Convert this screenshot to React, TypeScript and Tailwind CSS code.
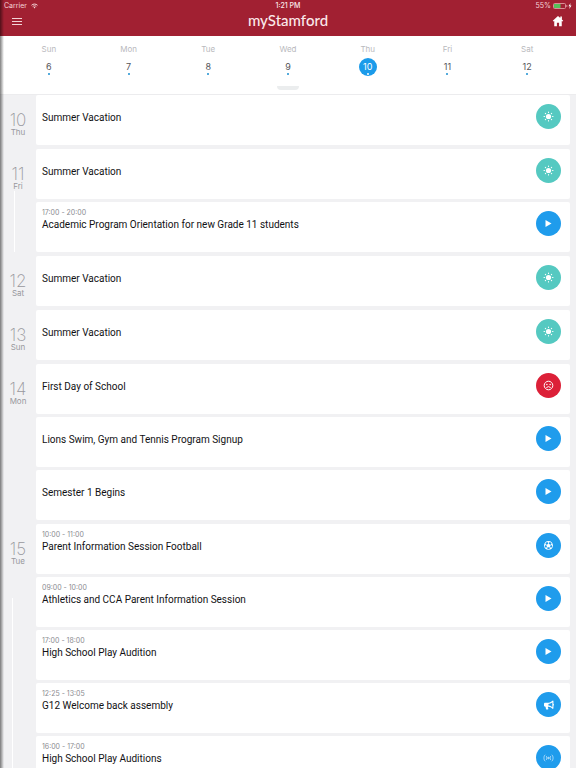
import { useState } from "react";
import clsx from "clsx";
import { FaBullhorn } from "react-icons/fa";
import { IoMdFootball } from "react-icons/io";

type IconName = "sun" | "play" | "sad" | "football" | "megaphone" | "radio";

interface CalendarEvent {
  title: string;
  time?: string;
  icon: IconName;
}

interface AgendaDay {
  date: number;
  weekday: string;
  line?: "short" | "long";
  events: CalendarEvent[];
}

const WEEK = [
  { weekday: "Sun", date: 6 },
  { weekday: "Mon", date: 7 },
  { weekday: "Tue", date: 8 },
  { weekday: "Wed", date: 9 },
  { weekday: "Thu", date: 10 },
  { weekday: "Fri", date: 11 },
  { weekday: "Sat", date: 12 },
];

const AGENDA: AgendaDay[] = [
  { date: 10, weekday: "Thu", events: [{ title: "Summer Vacation", icon: "sun" }] },
  {
    date: 11,
    weekday: "Fri",
    line: "short",
    events: [
      { title: "Summer Vacation", icon: "sun" },
      { title: "Academic Program Orientation for new Grade 11 students", time: "17:00 - 20:00", icon: "play" },
    ],
  },
  { date: 12, weekday: "Sat", events: [{ title: "Summer Vacation", icon: "sun" }] },
  { date: 13, weekday: "Sun", events: [{ title: "Summer Vacation", icon: "sun" }] },
  {
    date: 14,
    weekday: "Mon",
    events: [
      { title: "First Day of School", icon: "sad" },
      { title: "Lions Swim, Gym and Tennis Program Signup", icon: "play" },
      { title: "Semester 1 Begins", icon: "play" },
    ],
  },
  {
    date: 15,
    weekday: "Tue",
    line: "long",
    events: [
      { title: "Parent Information Session Football", time: "10:00 - 11:00", icon: "football" },
      { title: "Athletics and CCA Parent Information Session", time: "09:00 - 10:00", icon: "play" },
      { title: "High School Play Audition", time: "17:00 - 18:00", icon: "play" },
      { title: "G12 Welcome back assembly", time: "12:25 - 13:05", icon: "megaphone" },
      { title: "High School Play Auditions", time: "16:00 - 17:00", icon: "radio" },
    ],
  },
];

export default function App() {
  const [selected, setSelected] = useState(10);

  return (
    <div className="relative flex h-screen flex-col overflow-hidden bg-[#f1f1f3] font-['Inter',sans-serif]">
      <TopBar />

      {/* ── Week strip ───────────────────────────────────────────────── */}
      <nav aria-label="Week" className="shrink-0 border-b border-[#ececee] bg-white px-[9px] pt-2">
        <div className="grid grid-cols-7">
          {WEEK.map((day) => (
            <button key={day.date} onClick={() => setSelected(day.date)} className="flex flex-col items-center gap-1">
              <span className="text-[8px] leading-[10px] text-[#b9b9bd]">{day.weekday}</span>
              <span
                className={clsx(
                  "flex size-[18px] flex-col items-center rounded-full pt-[3px]",
                  selected === day.date ? "bg-[#1b9bea] text-white" : "text-[#55555a]"
                )}
              >
                <span className="text-[9px] leading-3">{day.date}</span>
                <span
                  className={clsx("size-[2px] rounded-full", selected === day.date ? "bg-white" : "bg-[#1d8fd0]")}
                />
              </span>
            </button>
          ))}
        </div>
        <div className="mx-auto mt-[10px] mb-1 h-1 w-[22px] rounded-b-full rounded-t-xs bg-[#ebedee]" />
      </nav>

      {/* ── Agenda ───────────────────────────────────────────────────── */}
      <main className="flex min-h-0 flex-1 flex-col gap-1 overflow-y-auto [scrollbar-width:none]">
        {AGENDA.map((day) => (
          <DaySection key={day.date} day={day} />
        ))}
      </main>

      {/* edge shadow */}
      <div className="pointer-events-none absolute inset-y-0 left-0 w-1 bg-linear-to-r from-black/50 to-transparent" />
    </div>
  );
}

function TopBar() {
  return (
    <header className="shrink-0 bg-[#a12032] text-white">
      <div className="grid h-3 grid-cols-3 items-center px-1 text-[7px] leading-3 text-[#f5d5d8]">
        <span className="flex items-center gap-1">
          Carrier
          <WifiIcon />
        </span>
        <span className="text-center font-medium text-[#fbe9ea]">1:21 PM</span>
        <span className="flex items-center justify-end gap-[2px]">
          55%
          <BatteryIcon />
        </span>
      </div>
      <div className="flex h-6 items-start justify-between px-3">
        <button aria-label="Menu" className="flex h-[18px] w-3 flex-col justify-center gap-[2px]">
          <span className="h-px w-[10px] bg-[#f3d3d6]" />
          <span className="h-px w-[10px] bg-[#f3d3d6]" />
          <span className="h-px w-[10px] bg-[#f3d3d6]" />
        </button>
        <h1 className="font-['Lato',sans-serif] text-[15px] leading-4 font-medium text-[#fbe9ea]">myStamford</h1>
        <button aria-label="Home" className="flex h-[18px] items-center">
          <HomeIcon />
        </button>
      </div>
    </header>
  );
}

function DaySection({ day }: { day: AgendaDay }) {
  return (
    <section className="flex shrink-0">
      <div className="flex w-9 shrink-0 flex-col items-center pt-[18px] text-[#98989d]">
        <h2 className="flex flex-col items-center">
          <span className="text-[17px] leading-[14px] font-extralight">{day.date}</span>
          <span className="text-[8px] leading-[10px]">{day.weekday}</span>
        </h2>
        {day.line === "short" && <div className="mr-2 w-px flex-1 bg-white" />}
        {day.line === "long" && <div className="mt-8 mr-3 w-px flex-1 bg-white" />}
      </div>
      <ul className="flex min-w-0 flex-1 flex-col gap-[3px] pr-[6px]">
        {day.events.map((event) => (
          <EventCard key={event.title} event={event} />
        ))}
      </ul>
    </section>
  );
}

function EventCard({ event }: { event: CalendarEvent }) {
  return (
    <li className="flex h-[50px] items-start justify-between rounded-xs bg-white pr-[9px] pl-[6px]">
      <div className="flex flex-col pt-[7px]">
        <span className="h-2 text-[7px] leading-2 text-[#8b8b90]">{event.time}</span>
        <h3 className="font-['Roboto',sans-serif] text-[10px] leading-4 text-[#111113]">{event.title}</h3>
      </div>
      <EventBadge name={event.icon} />
    </li>
  );
}

const BADGE_COLORS: Record<IconName, string> = {
  sun: "bg-[#55c9c1]",
  play: "bg-[#1f9cec]",
  sad: "bg-[#dc2038]",
  football: "bg-[#1f9cec]",
  megaphone: "bg-[#1f9cec]",
  radio: "bg-[#1f9cec]",
};

function EventBadge({ name }: { name: IconName }) {
  return (
    <span
      className={clsx(
        "mt-[9px] flex size-[25px] shrink-0 items-center justify-center rounded-full text-white",
        BADGE_COLORS[name]
      )}
    >
      {name === "sun" && <SunIcon />}
      {name === "play" && (
        <svg width="9" height="9" viewBox="0 0 9 9" fill="currentColor">
          <path d="M1.500 1 7.500 4.500 1.500 8Z" />
        </svg>
      )}
      {name === "sad" && <SadIcon />}
      {name === "football" && <IoMdFootball size={11} />}
      {name === "megaphone" && <FaBullhorn size={10} />}
      {name === "radio" && <RadioIcon />}
    </span>
  );
}

// ─── Icons ────────────────────────────────────────────────────────────────────

function SunIcon() {
  return (
    <svg width="11" height="11" viewBox="0 0 22 22" fill="currentColor">
      <circle cx="11" cy="11" r="5.200" />
      {[0, 45, 90, 135, 180, 225, 270, 315].map((angle) => (
        <rect key={angle} x="10" y="1" width="2" height="3" rx="1" transform={`rotate(${angle} 11 11)`} />
      ))}
    </svg>
  );
}

function SadIcon() {
  return (
    <svg width="11" height="11" viewBox="0 0 22 22" fill="none" stroke="currentColor" strokeWidth="2">
      <circle cx="11" cy="11" r="8.6" />
      <path d="M7 16c1-3.600 7-3.600 8 0" />
      <circle cx="7.800" cy="9" r="1.500" fill="currentColor" stroke="none" />
      <circle cx="14.200" cy="9" r="1.500" fill="currentColor" stroke="none" />
    </svg>
  );
}

function RadioIcon() {
  return (
    <svg width="11" height="8" viewBox="0 0 22 16" fill="none" stroke="#b9e0fa" strokeWidth="1.6">
      <path d="M4.500 1.500c-3.600 1.500-3.600 11.500 0 13M17.500 1.500c3.600 1.500 3.600 11.500 0 13" />
      <path d="M6.500 4c1.600 2.500 1.600 5.500 0 8M15.500 4c-1.600 2.500-1.600 5.500 0 8" />
      <circle cx="11" cy="8" r="1.600" fill="#b9e0fa" />
    </svg>
  );
}

function WifiIcon() {
  return (
    <svg width="7" height="6" viewBox="0 0 14 11" fill="none" stroke="currentColor" strokeWidth="2">
      <path d="M1 4c3.400-3.200 8.600-3.200 12 0M3.400 6.600c2-1.900 5.200-1.900 7.200 0" />
      <path d="M5.200 8.400 7 10.400l1.800-2c-1-.9-2.600-.9-3.600 0Z" fill="currentColor" stroke="none" />
    </svg>
  );
}

function BatteryIcon() {
  return (
    <svg width="19" height="6" viewBox="0 0 19 6" fill="none">
      <rect x=".5" y=".5" width="12" height="5" rx="1" stroke="#d98f97" />
      <rect x="1" y="1" width="6.500" height="4" fill="#56c15a" />
      <path d="M13.300 2v2h1V2Z" fill="#d98f97" />
      <path d="m17.500 0-2 3.300h1.300L16.300 6l2.200-3.400h-1.300Z" fill="#fff" />
    </svg>
  );
}

function HomeIcon() {
  return (
    <svg width="12" height="12" viewBox="0 0 24 24" fill="#fff">
      <path d="M12 2 1.500 11.500l1.600 1.700L4.500 12v10.500h5.300V15.500h4.400v7h5.300V12l1.400 1.200 1.600-1.700-2.700-2.400V3h-3.200v3.200Z" />
    </svg>
  );
}
